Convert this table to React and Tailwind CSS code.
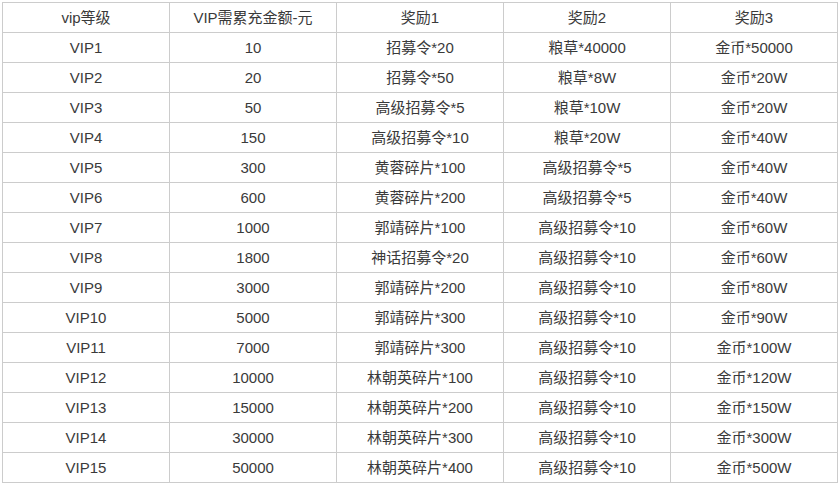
const rows = [
  ["vip等级", "VIP需累充金额-元", "奖励1", "奖励2", "奖励3"],
  ["VIP1", "10", "招募令*20", "粮草*40000", "金币*50000"],
  ["VIP2", "20", "招募令*50", "粮草*8W", "金币*20W"],
  ["VIP3", "50", "高级招募令*5", "粮草*10W", "金币*20W"],
  ["VIP4", "150", "高级招募令*10", "粮草*20W", "金币*40W"],
  ["VIP5", "300", "黄蓉碎片*100", "高级招募令*5", "金币*40W"],
  ["VIP6", "600", "黄蓉碎片*200", "高级招募令*5", "金币*40W"],
  ["VIP7", "1000", "郭靖碎片*100", "高级招募令*10", "金币*60W"],
  ["VIP8", "1800", "神话招募令*20", "高级招募令*10", "金币*60W"],
  ["VIP9", "3000", "郭靖碎片*200", "高级招募令*10", "金币*80W"],
  ["VIP10", "5000", "郭靖碎片*300", "高级招募令*10", "金币*90W"],
  ["VIP11", "7000", "郭靖碎片*300", "高级招募令*10", "金币*100W"],
  ["VIP12", "10000", "林朝英碎片*100", "高级招募令*10", "金币*120W"],
  ["VIP13", "15000", "林朝英碎片*200", "高级招募令*10", "金币*150W"],
  ["VIP14", "30000", "林朝英碎片*300", "高级招募令*10", "金币*300W"],
  ["VIP15", "50000", "林朝英碎片*400", "高级招募令*10", "金币*500W"],
];

export default function App() {
  return (
    <div className="w-[840px] h-[485px] bg-white overflow-hidden pl-[2px] pt-[2px]">
      <div
        className="grid grid-cols-[repeat(5,167px)] w-max border-l border-t border-[#cccccc] text-[15px] text-[#3a3a3a]"
        style={{ fontFamily: '"Liberation Sans", "Noto Sans CJK SC", sans-serif' }}
      >
        {rows.map((r, i) =>
          r.map((c, j) => (
            <div
              key={i + "-" + j}
              className="h-[30px] border-r border-b border-[#cccccc] flex items-center justify-center leading-none"
            >
              {c}
            </div>
          ))
        )}
      </div>
    </div>
  );
}
